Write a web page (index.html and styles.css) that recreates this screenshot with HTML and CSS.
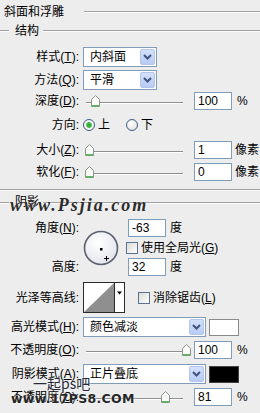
FILE: index.html
```html
<!DOCTYPE html>
<html>
  <head>
    <meta charset="utf-8">
    <title>斜面和浮雕</title>
    <link rel="stylesheet" href="styles.css">
  </head>
  <body>
    <div id="panel">
      <div class="heading"><span class="heading-text">斜面和浮雕</span><i class="rule"></i></div>
      <div class="group-head"><i class="rule lead"></i><span class="group-text">结构</span><i class="rule"></i></div>

      <div class="row row-style">
        <span class="lbl">样式(<u>T</u>):</span>
        <div class="select narrow"><span class="sel-text">内斜面</span><b class="drop"><svg width="9" height="6" viewBox="0 0 9 6"><path d="M1 1 L4.5 4.5 L8 1" fill="none" stroke="#3d5480" stroke-width="2"/></svg></b></div>
      </div>

      <div class="row row-method">
        <span class="lbl">方法(<u>Q</u>):</span>
        <div class="select narrow"><span class="sel-text">平滑</span><b class="drop"><svg width="9" height="6" viewBox="0 0 9 6"><path d="M1 1 L4.5 4.5 L8 1" fill="none" stroke="#3d5480" stroke-width="2"/></svg></b></div>
      </div>

      <div class="row row-depth">
        <span class="lbl">深度(<u>D</u>):</span>
        <div class="slider"><i class="track"></i><span class="thumb" style="left: 8px"><svg width="9" height="12" viewBox="0 0 9 12"><path d="M0.5 4.5 L4.5 0.5 L8.5 4.5 V11.5 H0.5 Z" fill="#fbfbf8" stroke="#8c948c"/><path d="M1 10.8 H8" stroke="#4cb04c" stroke-width="1.4"/></svg></span></div>
        <span class="num">100</span><span class="unit">%</span>
      </div>

      <div class="row row-dir">
        <span class="lbl">方向:</span>
        <span class="radio on"></span><span class="opt">上</span>
        <span class="radio second"></span><span class="opt">下</span>
      </div>

      <div class="row row-size">
        <span class="lbl">大小(<u>Z</u>):</span>
        <div class="slider"><i class="track"></i><span class="thumb" style="left: 2px"><svg width="9" height="12" viewBox="0 0 9 12"><path d="M0.5 4.5 L4.5 0.5 L8.5 4.5 V11.5 H0.5 Z" fill="#fbfbf8" stroke="#8c948c"/><path d="M1 10.8 H8" stroke="#4cb04c" stroke-width="1.4"/></svg></span></div>
        <span class="num">1</span><span class="unit px">像素</span>
      </div>

      <div class="row row-soft">
        <span class="lbl">软化(<u>F</u>):</span>
        <div class="slider"><i class="track"></i><span class="thumb" style="left: 2px"><svg width="9" height="12" viewBox="0 0 9 12"><path d="M0.5 4.5 L4.5 0.5 L8.5 4.5 V11.5 H0.5 Z" fill="#fbfbf8" stroke="#8c948c"/><path d="M1 10.8 H8" stroke="#4cb04c" stroke-width="1.4"/></svg></span></div>
        <span class="num">0</span><span class="unit px">像素</span>
      </div>

      <i class="separator"></i>
      <div class="group-head shadow-head"><i class="rule lead"></i><span class="group-text">阴影</span><i class="rule"></i></div>

      <div class="angle-grid">
        <span class="lbl g-angle">角度(<u>N</u>):</span>
        <div class="dial">
          <svg width="36" height="36" viewBox="0 0 36 36">
            <defs>
              <radialGradient id="dialfill" cx="40%" cy="35%" r="70%">
                <stop offset="0" stop-color="#ffffff"/>
                <stop offset="1" stop-color="#e2e4ec"/>
              </radialGradient>
            </defs>
            <circle cx="18" cy="18" r="16.5" fill="url(#dialfill)" stroke="#5c6170" stroke-width="1.6"/>
            <rect x="17" y="18" width="2.5" height="2.5" fill="#000"/>
            <path d="M21 28.5 H26 M23.5 26 V31" stroke="#000" stroke-width="1"/>
          </svg>
        </div>
        <div class="g-cell g-angle"><span class="num">-63</span><span class="unit deg">度</span></div>
        <div class="g-cell g-global"><span class="check"></span><span class="opt">使用全局光(<u>G</u>)</span></div>
        <span class="lbl g-alt">高度:</span>
        <div class="g-cell g-alt"><span class="num">32</span><span class="unit deg">度</span></div>
      </div>

      <div class="row row-contour">
        <span class="lbl">光泽等高线:</span>
        <div class="contour">
          <svg width="42" height="31" viewBox="0 0 42 31">
            <rect x="0.5" y="0.5" width="41" height="30" fill="#fff" stroke="#2a2a2a"/>
            <path d="M1 30 L31 1 L31 30 Z" fill="#8f8f8f"/>
            <line x1="31.5" y1="0" x2="31.5" y2="31" stroke="#2a2a2a"/>
            <path d="M34 9.5 H39 L36.5 12.5 Z" fill="#000"/>
          </svg>
        </div>
        <span class="check aa"></span><span class="opt">消除锯齿(<u>L</u>)</span>
      </div>

      <div class="row row-hmode">
        <span class="lbl">高光模式(<u>H</u>):</span>
        <div class="select wide"><span class="sel-text">颜色减淡</span><b class="drop"><svg width="9" height="6" viewBox="0 0 9 6"><path d="M1 1 L4.5 4.5 L8 1" fill="none" stroke="#3d5480" stroke-width="2"/></svg></b></div>
        <span class="swatch white"></span>
      </div>

      <div class="row row-hop">
        <span class="lbl">不透明度(<u>O</u>):</span>
        <div class="slider"><i class="track"></i><span class="thumb" style="left: 99px"><svg width="9" height="12" viewBox="0 0 9 12"><path d="M0.5 4.5 L4.5 0.5 L8.5 4.5 V11.5 H0.5 Z" fill="#fbfbf8" stroke="#8c948c"/><path d="M1 10.8 H8" stroke="#4cb04c" stroke-width="1.4"/></svg></span></div>
        <span class="num">100</span><span class="unit">%</span>
      </div>

      <div class="row row-smode">
        <span class="lbl">阴影模式(<u>A</u>):</span>
        <div class="select wide"><span class="sel-text">正片叠底</span><b class="drop"><svg width="9" height="6" viewBox="0 0 9 6"><path d="M1 1 L4.5 4.5 L8 1" fill="none" stroke="#3d5480" stroke-width="2"/></svg></b></div>
        <span class="swatch black"></span>
      </div>

      <div class="row row-sop">
        <span class="lbl">不透明度(<u>C</u>):</span>
        <div class="slider"><i class="track"></i><span class="thumb" style="left: 78px"><svg width="9" height="12" viewBox="0 0 9 12"><path d="M0.5 4.5 L4.5 0.5 L8.5 4.5 V11.5 H0.5 Z" fill="#fbfbf8" stroke="#8c948c"/><path d="M1 10.8 H8" stroke="#4cb04c" stroke-width="1.4"/></svg></span></div>
        <span class="num">81</span><span class="unit">%</span>
      </div>

      <span class="wm-psjia">www.Psjia.com</span>
      <span class="wm-qi">一起ps吧</span>
      <span class="wm-site">www.17PS8.COM</span>
    </div>
  </body>
</html>
```

FILE: styles.css
```css
body {
    margin: 0;
    background: #ededed;
}
#panel {
    position: relative;
    width: 260px;
    height: 413px;
    overflow: hidden;
    font-family: "Liberation Sans", "Noto Sans CJK SC", sans-serif;
    font-size: 12px;
    line-height: 16px;
    color: #000;
}
u {
    text-decoration: underline;
}
.rule {
    display: block;
    flex: 1;
    height: 1px;
    background: #a2a2a2;
    box-shadow: 0 1px 0 #fbfbfb;
}
.heading {
    display: flex;
    align-items: center;
    height: 23px;
}
.heading-text {
    padding-left: 4px;
    margin-right: 20px;
}
.group-head {
    display: flex;
    align-items: center;
    height: 15px;
}
.rule.lead {
    flex: none;
    width: 9px;
}
.group-text {
    padding: 0 4px 0 6px;
}
.row {
    display: flex;
    align-items: center;
}
.lbl {
    flex: none;
    width: 79px;
    text-align: right;
    white-space: nowrap;
}

/* row spacing */
.row-style { margin-top: 9px; height: 20px; }
.row-method { margin-top: 3px; height: 20px; }
.row-depth { margin-top: 2px; height: 18px; }
.row-dir { margin-top: 6px; height: 18px; }
.row-size { margin-top: 7px; height: 18px; }
.row-soft { margin-top: 4px; height: 18px; }
.row-contour { margin-top: 6px; height: 31px; }
.row-hmode { margin-top: 4px; height: 20px; }
.row-hop { margin-top: 4px; height: 18px; }
.row-smode { margin-top: 5px; height: 20px; }
.row-sop { margin-top: 4px; height: 18px; }

.separator {
    display: block;
    margin-top: 8px;
    height: 1px;
    background: #a2a2a2;
    box-shadow: 0 1px 0 #fbfbfb;
}
.shadow-head {
    margin-top: 3px;
    height: 18px;
}

/* dropdowns */
.select {
    display: flex;
    align-items: center;
    box-sizing: border-box;
    height: 20px;
    margin-left: 4px;
    border: 1px solid #7f9db9;
    background: #fff;
}
.select.narrow { width: 74px; }
.select.wide { width: 123px; }
.sel-text {
    flex: 1;
    padding-left: 6px;
    white-space: nowrap;
}
.drop {
    display: flex;
    align-items: center;
    justify-content: center;
    width: 15px;
    height: 16px;
    margin-right: 1px;
    border-radius: 2px;
    background: linear-gradient(#d4e0fb, #b7cbf4);
    border: 1px solid #b4c6ee;
    box-sizing: border-box;
}

/* sliders */
.slider {
    position: relative;
    flex: none;
    width: 111px;
    height: 12px;
    margin-left: 4px;
}
.track {
    position: absolute;
    left: 3px;
    top: 7px;
    width: 97px;
    height: 1px;
    background: #8e8e8e;
    box-shadow: 0 1px 0 #fff;
}
.thumb {
    position: absolute;
    top: 0;
    height: 12px;
}
.thumb svg {
    display: block;
}

/* number fields */
.num {
    flex: none;
    box-sizing: border-box;
    width: 38px;
    height: 18px;
    padding-left: 3px;
    border: 1px solid #7f9db9;
    background: #fff;
    line-height: 16px;
}
.unit {
    margin-left: 5px;
}
.unit.px {
    margin-left: 3px;
}
.unit.deg {
    margin-left: 4px;
}

/* radios and checkboxes */
.radio {
    flex: none;
    box-sizing: border-box;
    width: 12px;
    height: 12px;
    margin-left: 4px;
    border: 1px solid #3c5d8c;
    border-radius: 50%;
    background: radial-gradient(circle at 40% 35%, #fff, #dcdcd4);
}
.radio.on {
    background: radial-gradient(circle, #2fa52f 0, #4cbc4c 2.5px, #fff 3.5px, #dcdcd4 100%);
}
.radio.second {
    margin-left: 16px;
}
.opt {
    margin-left: 3px;
    white-space: nowrap;
}
.check {
    flex: none;
    box-sizing: border-box;
    width: 12px;
    height: 12px;
    border: 1px solid #5a7395;
    background: linear-gradient(135deg, #dcdcd6, #fdfdfd);
}
.check.aa {
    margin-left: 13px;
}

/* angle block */
.angle-grid {
    display: grid;
    grid-template-columns: 79px 47px 1fr;
    grid-template-rows: 18px 21px 18px;
    margin-top: 8px;
}
.angle-grid .lbl {
    align-self: center;
}
.lbl.g-angle { grid-row: 1; grid-column: 1; }
.lbl.g-alt { grid-row: 3; grid-column: 1; }
.dial {
    grid-row: 1 / 4;
    grid-column: 2;
    align-self: center;
    margin-left: 4px;
    height: 36px;
}
.dial svg {
    display: block;
}
.g-cell {
    display: flex;
    align-items: center;
    grid-column: 3;
}
.g-cell.g-angle { grid-row: 1; margin-left: 2px; }
.g-cell.g-global { grid-row: 2; }
.g-cell.g-alt { grid-row: 3; margin-left: 2px; }

/* contour */
.contour {
    flex: none;
    margin-left: 4px;
    height: 31px;
}
.contour svg {
    display: block;
}

/* colour swatches */
.swatch {
    flex: none;
    box-sizing: border-box;
    width: 30px;
    height: 17px;
    margin-left: 3px;
    border: 1px solid #8a8a8a;
}
.swatch.white { background: #fff; }
.swatch.black { background: #000; border-color: #444; }

/* watermarks over the dialog */
.wm-psjia {
    position: absolute;
    left: 10px;
    top: 197px;
    font-family: "Liberation Serif", serif;
    font-style: italic;
    font-weight: bold;
    font-size: 18px;
    letter-spacing: 2px;
    color: #2c2c2c;
    text-shadow: 0 0 1px #fff;
}
.wm-qi {
    position: absolute;
    left: 33px;
    top: 375px;
    font-family: "Noto Sans CJK SC", sans-serif;
    font-size: 14px;
    color: #27293a;
    text-shadow: 0 0 2px #fff;
}
.wm-site {
    position: absolute;
    left: 11px;
    top: 391px;
    font-family: "DejaVu Sans", sans-serif;
    font-weight: bold;
    font-size: 12.5px;
    letter-spacing: 0.3px;
    color: #262626;
    text-shadow: 0 0 2px #fff;
}
```
